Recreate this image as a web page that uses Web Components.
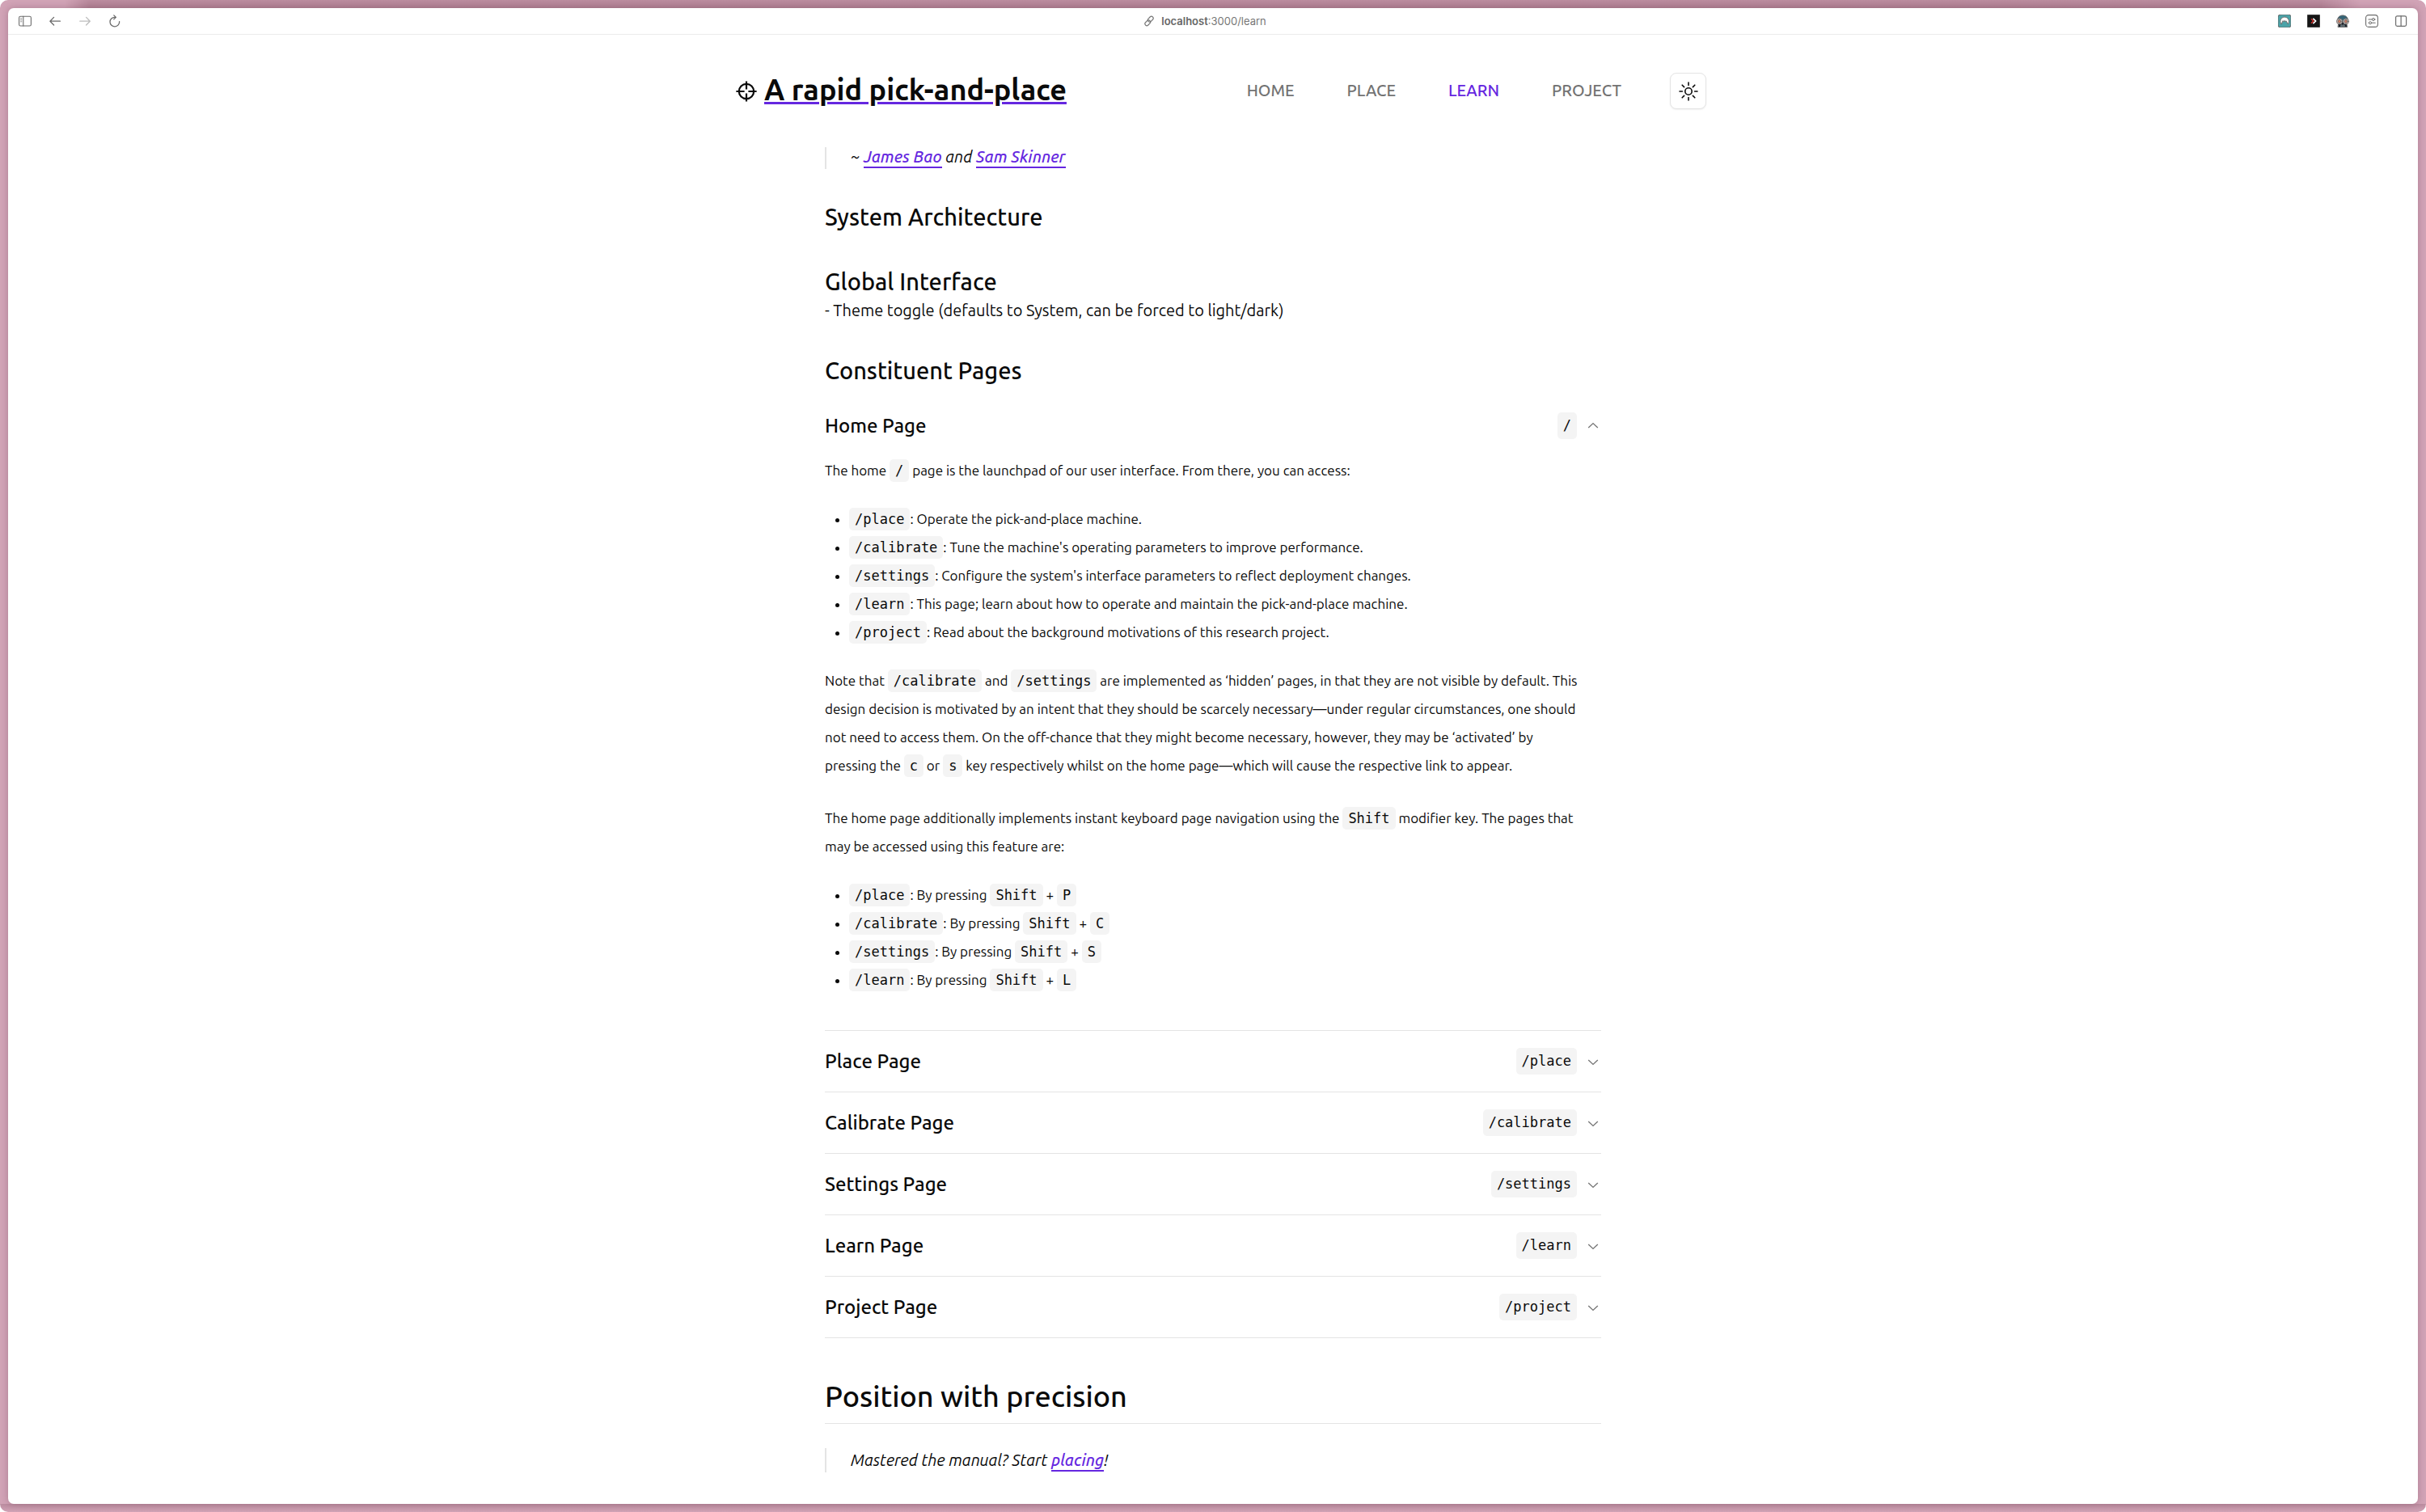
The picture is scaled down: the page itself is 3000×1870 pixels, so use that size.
<!DOCTYPE html>
<html lang="en">
<head>
<meta charset="utf-8">
<title>A rapid pick-and-place</title>
<style>
  :root {
    --ink: #0a0a0a;
    --muted: #737373;
    --accent: #6527e0;
    --line: #e4e4e4;
    --chip: #f4f4f4;
  }
  html { background: #fff; }
  body {
    margin: 0;
    font-family: Ubuntu, "Noto Sans", sans-serif;
    font-size: 20px;
    line-height: 30px;
    color: var(--ink);
  }
</style>
</head>
<body>

<desktop-frame>
  <browser-toolbar slot="toolbar" host="localhost" path=":3000/learn"></browser-toolbar>

  <site-header>
    <nav-link href="#home">HOME</nav-link>
    <nav-link href="#place">PLACE</nav-link>
    <nav-link href="#learn" current>LEARN</nav-link>
    <nav-link href="#project">PROJECT</nav-link>
  </site-header>

  <doc-article>
    <block-quote>~ <text-link href="#james">James Bao</text-link> and <text-link href="#sam">Sam Skinner</text-link></block-quote>

    <section-heading>System Architecture</section-heading>
    <section-heading>Global Interface</section-heading>
    <div>- Theme toggle (defaults to System, can be forced to light/dark)</div>
    <section-heading>Constituent Pages</section-heading>

    <accordion-group>
      <accordion-item label="Home Page" path="/" open>
        <doc-prose>The home <code-chip>/</code-chip> page is the launchpad of our user interface. From there, you can access:</doc-prose>
        <doc-list>
          <list-row><code-chip>/place</code-chip>: Operate the pick-and-place machine.</list-row>
          <list-row><code-chip>/calibrate</code-chip>: Tune the machine's operating parameters to improve performance.</list-row>
          <list-row><code-chip>/settings</code-chip>: Configure the system's interface parameters to reflect deployment changes.</list-row>
          <list-row><code-chip>/learn</code-chip>: This page; learn about how to operate and maintain the pick-and-place machine.</list-row>
          <list-row><code-chip>/project</code-chip>: Read about the background motivations of this research project.</list-row>
        </doc-list>
        <doc-prose>Note that <code-chip>/calibrate</code-chip> and <code-chip>/settings</code-chip> are implemented as ‘hidden’ pages, in that they are not visible by default. This design decision is motivated by an intent that they should be scarcely necessary—under regular circumstances, one should not need to access them. On the off-chance that they might become necessary, however, they may be ‘activated’ by pressing the <code-chip>c</code-chip> or <code-chip>s</code-chip> key respectively whilst on the home page—which will cause the respective link to appear.</doc-prose>
        <doc-prose spaced>The home page additionally implements instant keyboard page navigation using the <code-chip>Shift</code-chip> modifier key. The pages that may be accessed using this feature are:</doc-prose>
        <doc-list>
          <list-row><code-chip>/place</code-chip>: By pressing <code-chip>Shift</code-chip> + <code-chip>P</code-chip></list-row>
          <list-row><code-chip>/calibrate</code-chip>: By pressing <code-chip>Shift</code-chip> + <code-chip>C</code-chip></list-row>
          <list-row><code-chip>/settings</code-chip>: By pressing <code-chip>Shift</code-chip> + <code-chip>S</code-chip></list-row>
          <list-row><code-chip>/learn</code-chip>: By pressing <code-chip>Shift</code-chip> + <code-chip>L</code-chip></list-row>
        </doc-list>
      </accordion-item>
      <accordion-item label="Place Page" path="/place"></accordion-item>
      <accordion-item label="Calibrate Page" path="/calibrate"></accordion-item>
      <accordion-item label="Settings Page" path="/settings"></accordion-item>
      <accordion-item label="Learn Page" path="/learn"></accordion-item>
      <accordion-item label="Project Page" path="/project"></accordion-item>
    </accordion-group>

    <page-title>Position with precision</page-title>
    <block-quote>Mastered the manual? Start <text-link href="#placing">placing</text-link>!</block-quote>
  </doc-article>
</desktop-frame>

<script>
  // Registers a custom element whose shadow root is filled from a markup string.
  function define(name, css, markup, connected) {
    customElements.define(name, class extends HTMLElement {
      constructor() {
        super();
        this.attachShadow({ mode: 'open' });
      }
      connectedCallback() {
        const body = typeof markup === 'function' ? markup(this) : markup;
        this.shadowRoot.innerHTML = `<style>*{box-sizing:border-box}${css}</style>${body}`;
        if (connected) connected(this);
      }
    });
  }

  define('desktop-frame', `
    :host {
      display: block; min-height: 100vh; padding: 10px; box-sizing: border-box; border-radius: 10px;
      background:
        linear-gradient(90deg, #d1a3b6 80px, transparent 110px calc(100% - 130px), #d1a3b6 calc(100% - 80px)) top / 100% 10px no-repeat,
        linear-gradient(#bb8c9f, #b18194) top / 100% 10px no-repeat,
        linear-gradient(#bb8c9f, #d1a3b6) bottom / 100% 10px no-repeat,
        #d1a3b6;
    }
    .window {
      min-height: calc(100vh - 20px); background: #fff; border-radius: 7px; overflow: hidden;
      box-shadow: 0 0 8px rgba(90, 40, 60, .3);
    }`, `
    <div class="window"><slot name="toolbar"></slot><slot></slot></div>`);

  define('browser-toolbar', `
    :host {
      display: grid; grid-template-columns: 1fr auto 1fr; align-items: center;
      height: 33px; padding: 0 13px; box-sizing: border-box; border-bottom: 1px solid #ececec;
      font: 13px/20px Inter, sans-serif; color: #777;
    }
    div { display: flex; align-items: center; }
    .left { gap: 21px; }
    .right { gap: 20px; justify-content: flex-end; }
    .url { gap: 8px; padding-right: 20px; }
    b { font-weight: 600; color: #666; }
    button { display: block; width: 16px; height: 16px; padding: 0; border: 0; background: none; color: #6c6c6c; }
    button:disabled { color: #bdbdbd; }
    svg { display: block; fill: none; stroke: currentColor; stroke-linecap: round; stroke-linejoin: round; }`,
    host => `
    <div class="left">
      <button aria-label="Show sidebar"><svg width="16" height="16" viewBox="0 0 16 16"><rect x=".6" y="2.2" width="14.8" height="11.8" rx="1.8" stroke-width="1.1"/><path d="M5.8 2.2v11.8" stroke-width="1.1"/><path d="M2.6 4.8h1.2M2.6 6.8h1.2M2.6 8.8h1.2" stroke-width=".8"/></svg></button>
      <button aria-label="Back"><svg width="16" height="16" viewBox="0 0 16 16"><path d="M14.4 8.2H2M6.6 3.4 1.9 8.2l4.7 4.8" stroke-width="1.3"/></svg></button>
      <button aria-label="Forward" disabled><svg width="16" height="16" viewBox="0 0 16 16"><path d="M1.8 8.2h12.4M9.6 3.4l4.7 4.8-4.7 4.8" stroke-width="1.3"/></svg></button>
      <button aria-label="Reload"><svg width="16" height="16" viewBox="0 0 16 16"><path d="M13.6 8.600a5.800 5.800 0 1 1-5.700-5.300h1.200M6.800.900l2.600 2.500-2.600 2.500" stroke-width="1.300"/></svg></button>
    </div>
    <div class="url">
      <svg width="14" height="14" viewBox="0 0 24 24" stroke="#777" stroke-width="2"><rect x="11" y="1.500" width="8" height="13" rx="4" transform="rotate(45 15 8)"/><rect x="5" y="9.500" width="8" height="13" rx="4" transform="rotate(45 9 16)"/></svg>
      <span><b>${host.getAttribute('host')}</b>${host.getAttribute('path')}</span>
    </div>
    <div class="right">
      <button aria-label="VPN extension"><svg width="16" height="16" viewBox="0 0 16 16" stroke="none"><rect width="16" height="16" rx="3" fill="#4aa3a8"/><path d="M3.900 11.800A5.400 5.400 0 1 1 12.400 11.800L9.900 7.800 8.900 8.800 8 7.400 7.200 8.800 6.300 7.900z" fill="#fff"/></svg></button>
      <button aria-label="Video extension"><svg width="16" height="16" viewBox="0 0 16 16" stroke="none"><rect width="16" height="16" rx="1" fill="#161616"/><path d="M7.400 4.900 10.600 8l-3.200 3.100" stroke="#fff" stroke-width="1.600" stroke-linecap="butt" stroke-linejoin="miter"/><path d="M5 5.200 7.800 8 5 10.800" stroke="#d8332b" stroke-width="1.400" stroke-linecap="butt" stroke-linejoin="miter"/></svg></button>
      <button aria-label="Privacy extension"><svg width="16" height="16" viewBox="0 0 16 16" stroke="none"><path d="M1.600 8C1.200 3.400 4.200 1 8 1s6.800 2.400 6.400 7z" fill="#346477"/><path d="M3.600 8.500h8.800l1.200 6.900H2.400z" fill="#141c26"/><circle cx="4" cy="8.400" r="3.500" fill="#f6dfd6"/><circle cx="12" cy="8.400" r="3.500" fill="#f6dfd6"/><circle cx="4" cy="8.400" r="2" fill="#cf7a62"/><circle cx="12" cy="8.400" r="2" fill="#cf7a62"/><path d="M6 12.800h1.400v2.600H6zM8.800 12.800h1.400v2.600H8.800z" fill="#4c7f93"/></svg></button>
      <button aria-label="Page settings"><svg width="16" height="16" viewBox="0 0 16 16"><rect x=".6" y=".6" width="14.8" height="14.8" rx="3.400" stroke-width="1.100"/><path d="M4 6h4.200M11.600 6h.6M4 10.300h.4M8 10.300h4.200" stroke-width="1.100"/><circle cx="9.900" cy="6" r="1.500" stroke-width="1"/><circle cx="6.100" cy="10.300" r="1.500" stroke-width="1"/></svg></button>
      <button aria-label="Split view"><svg width="16" height="16" viewBox="0 0 16 16"><rect x="1.600" y="1.800" width="13" height="12.600" rx="1.800" stroke-width="1.200"/><path d="M8.100 1.800v12.600" stroke-width="1.200"/></svg></button>
    </div>`);

  define('site-header', `
    :host { display: block; position: sticky; top: 0; z-index: 1; background: #fff; }
    header {
      display: flex; align-items: center; max-width: 1220px; height: 139px; margin: 0 auto;
      padding-left: 20px; box-sizing: border-box;
    }
    .logo { display: block; margin-right: 9px; }
    .brand {
      padding-bottom: 3px; font-size: 36px; line-height: 40px; font-weight: 700; color: var(--ink);
      text-decoration: underline; text-decoration-color: var(--accent);
      text-decoration-thickness: 3px; text-underline-offset: 2px;
    }
    nav { display: flex; gap: 65px; margin: 0 60px 0 auto; padding-bottom: 2px; }
    .toggle {
      display: grid; place-items: center; width: 45px; height: 45px; padding: 0; background: #fff;
      border: 1px solid var(--line); border-radius: 8px; color: var(--ink);
      box-shadow: 0 1px 2px rgba(0, 0, 0, .06);
    }
    svg { fill: none; stroke: currentColor; }`, `
    <header>
      <svg class="logo" width="26" height="26" viewBox="0 0 26 26" stroke-width="2.200"><circle cx="13" cy="13" r="9.200"/><path d="M13 .4v10.200M13 15.400v10.200M.4 13h10.200M15.400 13h10.200"/></svg>
      <a class="brand" href="#home">A rapid pick-and-place</a>
      <nav aria-label="Main"><slot></slot></nav>
      <button class="toggle" aria-label="Toggle theme"><svg width="24" height="24" viewBox="0 0 24 24" stroke-width="1.600" stroke-linecap="round"><circle cx="12" cy="12" r="4.200"/><path d="M12 1v3.400M12 19.600V23M1 12h3.400M19.600 12H23M4.200 4.200l2.400 2.400M17.400 17.400l2.400 2.400M4.200 19.800l2.400-2.400M17.400 6.600l2.400-2.400"/></svg></button>
    </header>`);

  define('nav-link', `
    :host { display: block; }
    a { font-weight: 500; color: var(--muted); text-decoration: none; }
    :host([current]) a { color: var(--accent); }`,
    host => `<a href="${host.getAttribute('href')}"${host.hasAttribute('current') ? ' aria-current="page"' : ''}><slot></slot></a>`);

  define('doc-article', `
    :host { display: block; }
    main { max-width: 960px; margin: -3px auto 0; }`, `<main><slot></slot></main>`);

  define('text-link', `
    :host { display: inline; }
    a { padding-bottom: 1px; border-bottom: 2px solid var(--accent); font-weight: 500; color: var(--accent); text-decoration: none; }`,
    host => `<a href="${host.getAttribute('href')}"><slot></slot></a>`);

  define('block-quote', `
    :host { display: block; }
    blockquote { margin: 0; padding-left: 30px; border-left: 2px solid var(--line); font-style: italic; }`,
    `<blockquote><slot></slot></blockquote>`);

  define('section-heading', `
    :host { display: block; margin-top: 40px; }
    h2 { margin: 0; padding-bottom: 2px; font-size: 29px; line-height: 38px; font-weight: 500; }`, `<h2><slot></slot></h2>`);

  define('page-title', `
    :host { display: block; margin: 47px 0 30px; }
    h1 { margin: 0; padding-bottom: 8px; border-bottom: 1px solid var(--line); font-size: 36px; line-height: 50px; font-weight: 500; }`,
    `<h1><slot></slot></h1>`);

  define('code-chip', `
    :host { display: inline; line-height: 20px; }
    code {
      padding: 4px 7px; border-radius: 5px; background: var(--chip);
      font-family: "DejaVu Sans Mono", monospace; font-size: 17px;
    }
    :host([large]) code { display: block; line-height: 25px; }`, `<code><slot></slot></code>`);

  define('doc-prose', `
    :host { display: block; }
    :host([spaced]) { margin-top: 30px; }
    p { margin: 0; padding-right: 20px; font-size: 17px; line-height: 35px; }`, `<p><slot></slot></p>`);

  define('doc-list', `
    :host { display: block; margin: 25px 0; }
    div { padding-left: 30px; font-size: 17px; line-height: 35px; }`, `<div role="list"><slot></slot></div>`);

  define('list-row', `
    :host { display: list-item; list-style: disc outside; }`, `<slot></slot>`, host => host.setAttribute('role', 'listitem'));

  define('accordion-group', `
    :host { display: block; margin-top: 10px; }`, `<slot></slot>`);

  define('accordion-item', `
    :host { display: block; border-bottom: 1px solid var(--line); }
    h3 { margin: 0; font: inherit; }
    button {
      display: flex; align-items: center; width: 100%; height: 75px; padding: 0; border: 0; background: none;
      font: 500 24px/30px Ubuntu, "Noto Sans", sans-serif; color: var(--ink); text-align: left;
    }
    span { flex: 1; }
    svg { margin: 0 3px 0 13px; fill: none; stroke: #777; stroke-width: 1.400; }
    :host([open]) svg { transform: rotate(180deg); }
    .panel { display: none; padding-bottom: 20px; }
    :host([open]) .panel { display: flow-root; }`,
    host => `
    <h3><button aria-expanded="${host.hasAttribute('open')}">
      <span>${host.getAttribute('label')}</span>
      <code-chip large>${host.getAttribute('path')}</code-chip>
      <svg width="14" height="14" viewBox="0 0 14 14"><path d="M1.200 5 7 10.400 12.800 5"/></svg>
    </button></h3>
    <div class="panel"><slot></slot></div>`,
    host => {
      const button = host.shadowRoot.querySelector('button');
      button.addEventListener('click', () => {
        button.setAttribute('aria-expanded', host.toggleAttribute('open'));
      });
    });
</script>
</body>
</html>
